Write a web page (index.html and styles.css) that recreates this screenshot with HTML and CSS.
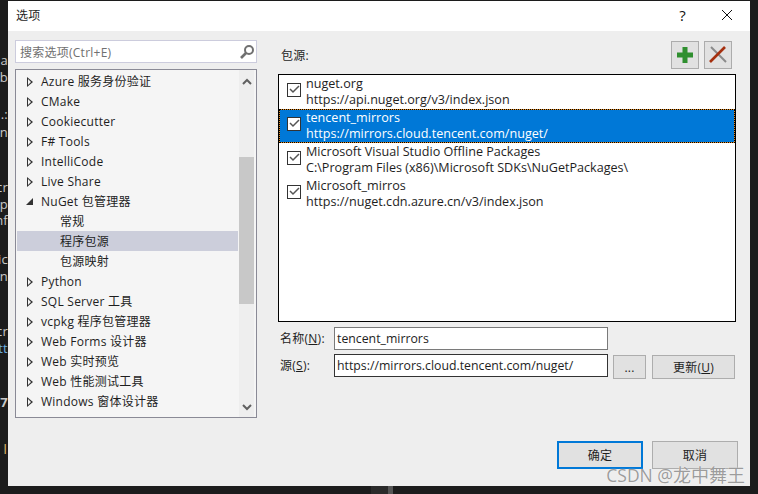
FILE: index.html
```html
<!DOCTYPE html>
<html lang="zh-CN">
<head>
<meta charset="UTF-8">
<meta name="viewport" content="width=device-width, initial-scale=1.0">
<title>选项</title>
<link rel="stylesheet" href="styles.css">
</head>
<body>

<!-- editor text that sticks out behind the dialog -->
<div class="behind">
  <span>a</span><span>b</span><span>.:</span><span>n</span><span>cr</span><span>ap</span><span>nf</span>
  <span>ic</span><span>n</span><span>cr</span><span class="blue">tt</span><span class="bold">37</span><span class="yellow">l</span>
</div>
<div class="splitter"></div>

<div class="dialog">
  <div class="titlebar">
    <span class="title">选项</span>
    <span class="help">?</span>
    <svg class="close" width="12" height="12" viewBox="0 0 12 12"><path d="M1 1l10 10M11 1L1 11" stroke="#111" fill="none"/></svg>
  </div>

  <div class="content">
    <div class="left">
      <div class="search">
        <span>搜索选项(Ctrl+E)</span>
        <svg width="16" height="16" viewBox="0 0 16 16"><circle cx="10" cy="6" r="4" fill="none" stroke="#707070" stroke-width="2"/><path d="M7 9l-5 5" stroke="#707070" stroke-width="2.6"/></svg>
      </div>
      <div class="tree">
        <div class="rows">
          <div class="row"><i class="arrow"></i>Azure 服务身份验证</div>
          <div class="row"><i class="arrow"></i>CMake</div>
          <div class="row"><i class="arrow"></i>Cookiecutter</div>
          <div class="row"><i class="arrow"></i>F# Tools</div>
          <div class="row"><i class="arrow"></i>IntelliCode</div>
          <div class="row"><i class="arrow"></i>Live Share</div>
          <div class="row"><i class="arrow open"></i>NuGet 包管理器</div>
          <div class="row sub">常规</div>
          <div class="row sub current">程序包源</div>
          <div class="row sub">包源映射</div>
          <div class="row"><i class="arrow"></i>Python</div>
          <div class="row"><i class="arrow"></i>SQL Server 工具</div>
          <div class="row"><i class="arrow"></i>vcpkg 程序包管理器</div>
          <div class="row"><i class="arrow"></i>Web Forms 设计器</div>
          <div class="row"><i class="arrow"></i>Web 实时预览</div>
          <div class="row"><i class="arrow"></i>Web 性能测试工具</div>
          <div class="row"><i class="arrow"></i>Windows 窗体设计器</div>
          <div class="row"><i class="arrow"></i>Xamarin</div>
        </div>
        <div class="scrollbar">
          <svg class="chev" width="10" height="7" viewBox="0 0 10 7"><path d="M1 6l4-4 4 4" fill="none" stroke="#606060" stroke-width="2"/></svg>
          <div class="track"><div class="thumb"></div></div>
          <svg class="chev" width="10" height="7" viewBox="0 0 10 7"><path d="M1 1l4 4 4-4" fill="none" stroke="#606060" stroke-width="2"/></svg>
        </div>
      </div>
    </div>

    <div class="right">
      <div class="head">
        <span class="head-label">包源:</span>
        <div class="tools">
          <button class="tool">
            <svg width="16" height="16" viewBox="0 0 16 16"><path d="M5.500 0h5v5.500H16v5h-5.500V16h-5v-5.500H0v-5h5.500z" fill="#2f8f2f"/></svg>
          </button>
          <button class="tool">
            <svg width="18" height="18" viewBox="0 0 18 18"><path d="M2 1l15 15" stroke="#8a8a8a" stroke-width="2"/><path d="M16 1L1 16" stroke="#a5300f" stroke-width="2.600"/></svg>
          </button>
        </div>
      </div>

      <div class="sources">
        <div class="source">
          <i class="check"><svg width="11" height="9" viewBox="0 0 11 9"><path d="M1 4l3 3 6-6" fill="none" stroke="#555" stroke-width="1.500"/></svg></i>
          <div><div>nuget.org</div><div>https://api.nuget.org/v3/index.json</div></div>
        </div>
        <div class="source selected">
          <i class="check"><svg width="11" height="9" viewBox="0 0 11 9"><path d="M1 4l3 3 6-6" fill="none" stroke="#555" stroke-width="1.500"/></svg></i>
          <div><div>tencent_mirrors</div><div>https://mirrors.cloud.tencent.com/nuget/</div></div>
        </div>
        <div class="source">
          <i class="check"><svg width="11" height="9" viewBox="0 0 11 9"><path d="M1 4l3 3 6-6" fill="none" stroke="#555" stroke-width="1.500"/></svg></i>
          <div><div>Microsoft Visual Studio Offline Packages</div><div>C:\Program Files (x86)\Microsoft SDKs\NuGetPackages\</div></div>
        </div>
        <div class="source">
          <i class="check"><svg width="11" height="9" viewBox="0 0 11 9"><path d="M1 4l3 3 6-6" fill="none" stroke="#555" stroke-width="1.500"/></svg></i>
          <div><div>Microsoft_mirros</div><div>https://nuget.cdn.azure.cn/v3/index.json</div></div>
        </div>
      </div>

      <div class="field">
        <label>名称(<u>N</u>):</label>
        <div class="input">tencent_mirrors</div>
      </div>
      <div class="field second">
        <label>源(<u>S</u>):</label>
        <div class="input active">https://mirrors.cloud.tencent.com/nuget/</div>
        <button class="btn dots">...</button>
        <button class="btn update">更新(<u>U</u>)</button>
      </div>

      <div class="actions">
        <button class="btn primary">确定</button>
        <button class="btn">取消</button>
      </div>
    </div>
  </div>
  <div class="watermark"><span class="latin">CSDN @</span>龙中舞王</div>
</div>

</body>
</html>
```

FILE: styles.css
```css
html, body {
  height: 100%;
}
body {
  margin: 0;
  padding: 1px 8px 8px;
  box-sizing: border-box;
  background: #1c1c1c;
  font-family: "Open Sans", "Noto Sans CJK SC", sans-serif;
  font-size: 12px;
  letter-spacing: 0.25px;
  color: #1e1e1e;
  overflow: hidden;
}

/* backdrop */
.behind {
  position: absolute;
  left: 0;
  top: 0;
  width: 8px;
  height: 100%;
  overflow: hidden;
  color: #c8c8c8;
  font-size: 13px;
}
.behind span {
  position: absolute;
  right: 0;
  line-height: 16px;
}
.behind span:nth-child(1) { top: 52px; }
.behind span:nth-child(2) { top: 69px; }
.behind span:nth-child(3) { top: 106px; }
.behind span:nth-child(4) { top: 124px; }
.behind span:nth-child(5) { top: 179px; }
.behind span:nth-child(6) { top: 196px; }
.behind span:nth-child(7) { top: 212px; }
.behind span:nth-child(8) { top: 251px; }
.behind span:nth-child(9) { top: 268px; }
.behind span:nth-child(10) { top: 323px; }
.behind span:nth-child(11) { top: 340px; }
.behind span:nth-child(12) { top: 394px; }
.behind span:nth-child(13) { top: 441px; }
.behind .blue { color: #6fb0e0; }
.behind .bold { font-weight: bold; }
.behind .yellow { color: #e0c070; right: 1px; }
.splitter {
  position: absolute;
  left: 371px;
  bottom: 0;
  width: 17px;
  height: 8px;
  background: #2a2a2a;
  border-right: 1px solid #555;
  box-shadow: 4px 0 0 0 #555;
}

.dialog {
  position: relative;
  height: 100%;
  background: #eeeeee;
}
.titlebar {
  height: 30px;
  box-sizing: border-box;
  padding: 0 17px 2px 8px;
  background: #fff;
  display: flex;
  align-items: center;
}
.title {
  flex: 1;
}
.help {
  font-size: 15px;
  color: #111;
  margin-right: 35px;
}
.content {
  display: flex;
  padding: 9px 14px 0 7px;
}
.left {
  width: 242px;
  margin-right: 21px;
}
.search {
  height: 23px;
  box-sizing: border-box;
  border: 1px solid #ccccdd;
  background: #fff;
  display: flex;
  align-items: center;
  justify-content: space-between;
  padding: 0 1px 0 4px;
  color: #707070;
}
.tree {
  margin-top: 6px;
  height: 347px;
  border: 1px solid #8a8a96;
  background: #f5f5f5;
  display: flex;
  overflow: hidden;
}
.rows {
  flex: 1;
  padding: 1px 1px 0;
}
.row {
  height: 20px;
  padding-left: 24px;
  display: flex;
  align-items: center;
  white-space: nowrap;
}
.row.sub {
  padding-left: 43px;
}
.row.current {
  background: #cccedb;
}
.arrow {
  position: relative;
  width: 0;
  height: 0;
  margin: 2px 8px 0 -14px;
  border-left: 6px solid #333;
  border-top: 5px solid transparent;
  border-bottom: 5px solid transparent;
}
.arrow::after {
  content: "";
  position: absolute;
  left: -5px;
  top: -3px;
  border-left: 3px solid #f5f5f5;
  border-top: 3px solid transparent;
  border-bottom: 3px solid transparent;
}
.arrow.open {
  margin: 0 8px 0 -15px;
  border: 0;
  border-right: 7px solid #333;
  border-top: 7px solid transparent;
}
.arrow.open::after {
  display: none;
}
.scrollbar {
  width: 15px;
  margin-right: 2px;
  flex-shrink: 0;
  background: #eeeeee;
  display: flex;
  flex-direction: column;
  align-items: center;
  padding: 8px 0 6px;
}
.track {
  flex: 1;
  width: 100%;
  padding-top: 72px;
}
.thumb {
  height: 147px;
  background: #c8c8c8;
}
.right {
  flex: 1;
}
.head {
  height: 34px;
  display: flex;
  justify-content: space-between;
  align-items: flex-start;
  padding: 1px 4px 0 3px;
  box-sizing: border-box;
}
.head-label {
  line-height: 28px;
  margin-top: 1px;
}
.tools {
  display: flex;
  gap: 5px;
}
.tool {
  width: 28px;
  height: 28px;
  padding: 0;
  border: 1px solid #acacac;
  background: #e1e1e1;
  display: flex;
  align-items: center;
  justify-content: center;
}
.sources {
  height: 246px;
  border: 1px solid #000;
  background: #fff;
  font-size: 12.6px;
  letter-spacing: 0;
}
.source {
  height: 34px;
  display: flex;
  align-items: center;
  gap: 5px;
  padding: 0 0 1px 8px;
  line-height: 16px;
  box-sizing: border-box;
}
.source.selected {
  background: #0078d7;
  color: #fff;
  box-shadow: inset 0 0 0 1px #e08a20;
  outline: 1px dotted #000;
  outline-offset: -1px;
}
.check {
  width: 12px;
  height: 12px;
  margin-bottom: 4px;
  border: 1px solid #333;
  background: #fff;
  display: flex;
  align-items: center;
  justify-content: center;
}
.field {
  display: flex;
  align-items: flex-start;
  margin-top: 5px;
  padding-left: 2px;
}
.field.second {
  margin-top: 4px;
}
.field label {
  width: 54px;
  line-height: 23px;
}
.input {
  width: 270px;
  height: 21px;
  line-height: 21px;
  padding-left: 2px;
  border: 1px solid #7a7a7a;
  background: #fff;
  font-size: 12.3px;
  letter-spacing: 0;
}
.input.active {
  border-color: #333;
}
.btn {
  height: 28px;
  width: 86px;
  padding: 0;
  border: 1px solid #adadad;
  background: #e1e1e1;
  font: inherit;
  letter-spacing: inherit;
  color: inherit;
}
.btn.dots {
  width: 33px;
  height: 24px;
  margin: 1px 0 0 5px;
}
.btn.update {
  width: 83px;
  height: 24px;
  margin: 1px 0 0 6px;
}
.btn.primary {
  border: 2px solid #0078d7;
}
.actions {
  display: flex;
  justify-content: flex-end;
  gap: 9px;
  margin-top: 62px;
  margin-right: -2px;
}
.watermark {
  position: absolute;
  right: 5px;
  bottom: -1px;
  font-size: 18px;
  letter-spacing: 0;
  color: rgba(130, 130, 130, 0.8);
  text-shadow: 0 0 1px #fff;
}
.watermark .latin {
  font-size: 17.5px;
}
```
